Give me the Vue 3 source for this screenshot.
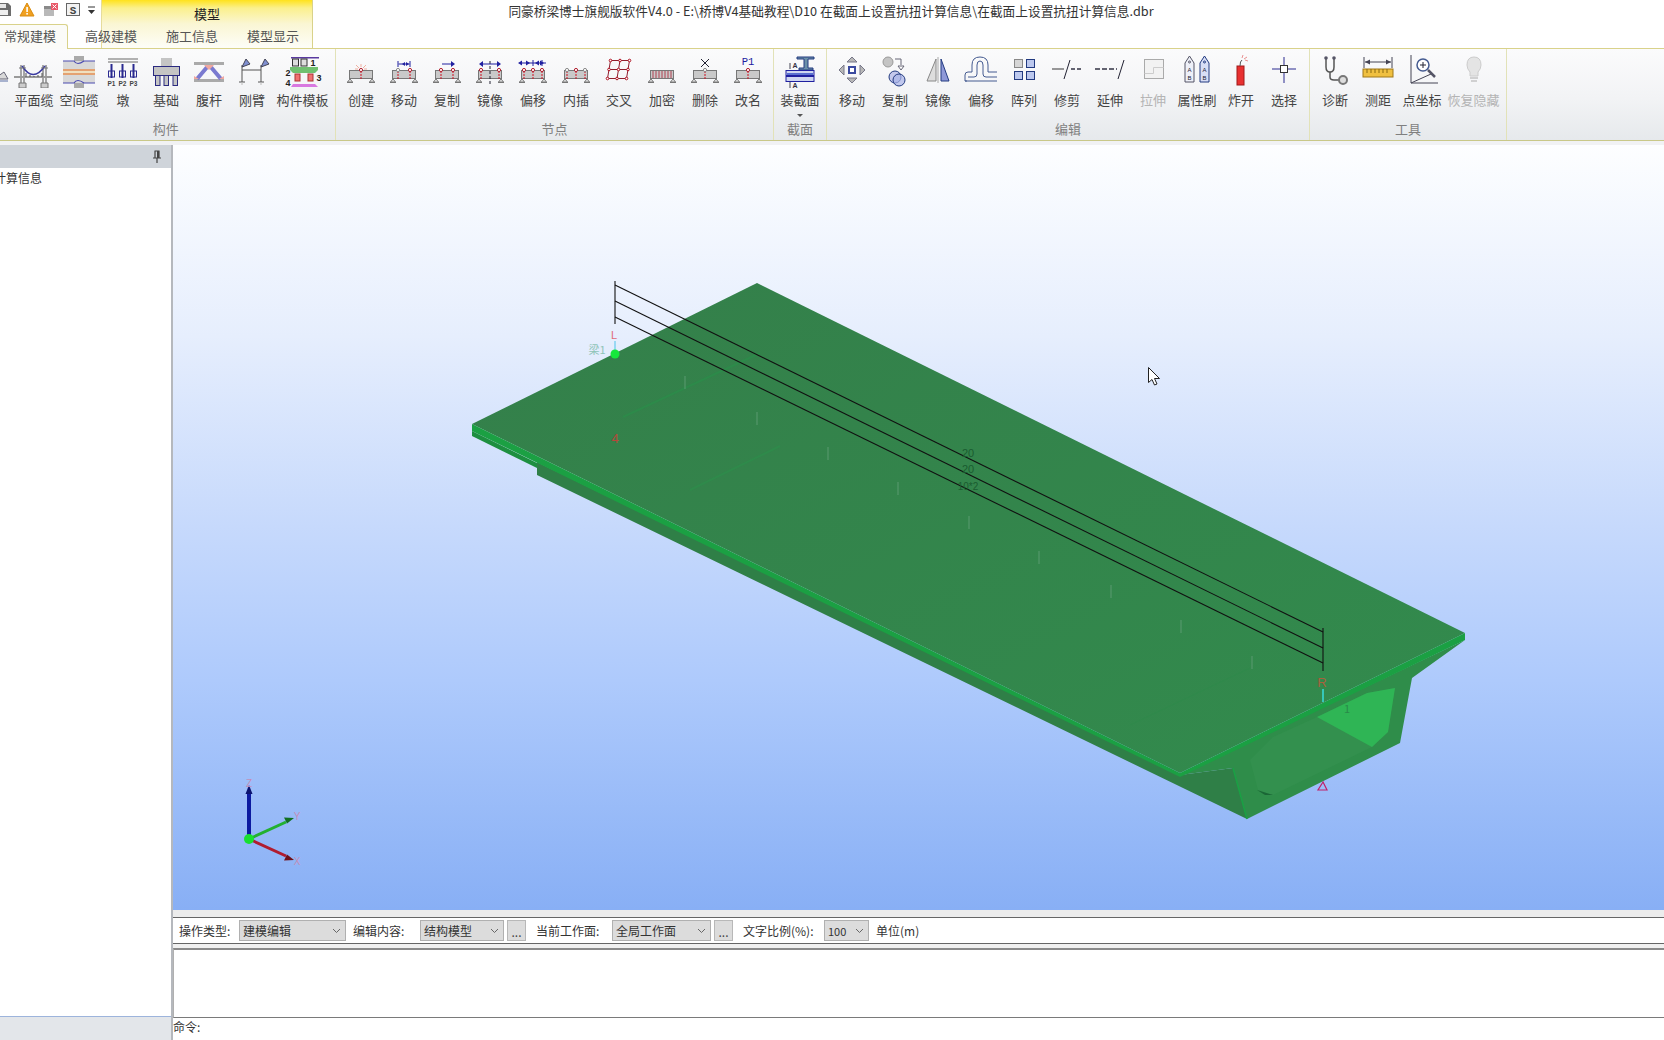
<template>
  <div class="app">
    <!-- 标题栏 -->
    <div class="titlebar">
      <div class="qat">
        <svg width="101" height="24" viewBox="0 0 101 24">
          <path d="M-4 3h12l3 3v10h-15z" fill="#6d6d6d" />
          <rect x="-2" y="4" width="8" height="4" fill="#e8e8e8" />
          <rect x="-2" y="10" width="10" height="5" fill="#efefef" />
          <path d="M27 3l7 13h-14z" fill="#f0a020" stroke="#d98c10" />
          <rect x="26.300" y="7" width="1.600" height="5" fill="#fff" />
          <rect x="26.300" y="13" width="1.600" height="1.600" fill="#fff" />
          <rect x="44" y="6" width="10" height="10" fill="#8a8a8a" />
          <rect x="44" y="9" width="10" height="7" fill="#b9b9b9" />
          <rect x="51" y="3" width="7" height="7" fill="#e85a6a" />
          <path d="M52.500 4.500l4 4m0-4l-4 4" stroke="#fff" />
          <rect x="66.500" y="3.500" width="13" height="12" fill="#f2f2f2" stroke="#666" />
          <text x="73" y="13.500" class="qat-s" text-anchor="middle">S</text>
          <path d="M88 7h7" stroke="#333" />
          <path d="M88 10h7l-3.500 4z" fill="#333" />
        </svg>
      </div>
      <div class="ctx">模型</div>
      <div class="title">同豪桥梁博士旗舰版软件V4.0 - E:\桥博V4基础教程\D10 在截面上设置抗扭计算信息\在截面上设置抗扭计算信息.dbr</div>
      <div class="tab-active">常规建模</div>
      <div class="ctx-tabs">
        <span>高级建模</span>
        <span>施工信息</span>
        <span>模型显示</span>
      </div>
    </div>

    <!-- 功能区 -->
    <div class="ribbon">
      <div class="group" v-for="group in groups" :key="group.name" :class="group.cls">
        <div class="items">
          <div class="cut" v-if="group.cut">
            <svg width="12" height="36" viewBox="0 0 12 36">
              <path d="M-6 27l10-7 4 7z" fill="#d9d9d9" stroke="#667" />
              <path d="M-6 29h14" stroke="#5b6ea5" />
            </svg>
          </div>
          <div class="tool" v-for="tool in group.tools" :key="tool.label" :class="{ off: tool.off }">
            <svg width="40" height="36" viewBox="0 0 40 36" v-html="icons[tool.icon]"></svg>
            <span class="tool-label">{{ tool.label }}</span>
            <i class="more" v-if="tool.more"></i>
          </div>
        </div>
        <div class="group-name">{{ group.name }}</div>
      </div>
    </div>
    <div class="gap"></div>

    <div class="body">
      <!-- 左侧树 -->
      <div class="side">
        <div class="side-head">
          <svg width="10" height="14" viewBox="0 0 10 14">
            <path d="M2.500 1h5M3 1v7M7 1v7M1 8h8M5 8v5" stroke="#444" stroke-width="1.200" fill="none" />
            <rect x="5" y="1" width="2" height="7" fill="#444" />
          </svg>
        </div>
        <div class="side-tree"><span>计算信息</span></div>
        <div class="side-foot"></div>
      </div>

      <div class="work">
        <!-- 三维视图 -->
        <div class="view">
          <svg class="scene" viewBox="173 145 1491 765">
            <defs>
              <linearGradient id="deck" x1="0" y1="0" x2="1" y2="1">
                <stop offset="0" stop-color="#347f4a" />
                <stop offset="1" stop-color="#328b4d" />
              </linearGradient>
            </defs>
            <!-- 腹板外侧 -->
            <polygon points="537,462 537,475 1247,819 1233,768 1180,775" fill="#2f7f47" />
            <!-- 端面 -->
            <polygon points="1180,775 1465,640 1412,678 1400,743 1247,819 1233,768" fill="#2f8d4a" />
            <line x1="1233" y1="768" x2="1247" y2="819" stroke="#1aa044" stroke-width="1.500" />
            <!-- 箱室 -->
            <polygon points="1250,760 1273,737 1317,717 1367,693 1395,688 1388,732 1372,747 1273,795 1258,790" fill="#33904e" />
            <polygon points="1317,717 1367,693 1395,688 1388,732 1372,747" fill="#2fb555" />
            <polygon points="1257,790 1273,795 1265,795" fill="#1b6636" />
            <!-- 顶板 -->
            <polygon points="472,424 757,283 1465,633 1180,773" fill="url(#deck)" />
            <polygon points="472,424 472,431 1180,777 1465,640 1465,633 1180,773" fill="#1ba043" />
            <polygon points="472,431 537,463 537,468 472,436" fill="#1d8f40" />
            <line x1="623" y1="417" x2="760" y2="353" stroke="#2d8a4a" stroke-width="2" />
            <line x1="690" y1="490" x2="780" y2="446" stroke="#2f8a4b" stroke-width="2" />
            <line x1="1130" y1="725" x2="1250" y2="668" stroke="#2f8a4b" stroke-width="1" />
            <!-- 竖向刻线 -->
            <g stroke="#5a9a70" stroke-width="1">
              <line v-for="t in ticks" :key="t[0]" :x1="t[0]" :x2="t[0]" :y1="t[1]" :y2="t[1] + 13" />
            </g>
            <!-- 钢束线 -->
            <g stroke="#111" stroke-width="1.100">
              <line x1="615" y1="285" x2="1323" y2="632" />
              <line x1="615" y1="301" x2="1323" y2="648" />
              <line x1="615" y1="317" x2="1323" y2="663" />
              <line x1="615" y1="281" x2="615" y2="324" />
              <line x1="1323" y1="628" x2="1323" y2="671" />
            </g>
            <g class="dim">
              <text x="968" y="457">20</text>
              <text x="968" y="473">20</text>
              <text x="968" y="490" class="dim-small">10*2</text>
            </g>
            <text x="614" y="339" class="mark" fill="#e06a78" text-anchor="middle">L</text>
            <line x1="615" y1="341" x2="615" y2="352" stroke="#7fd0f0" stroke-width="1.500" />
            <circle cx="615" cy="354" r="4.500" fill="#16e83c" />
            <text x="597" y="354" class="mark-cn" fill="#8fc4b8" text-anchor="middle">梁1</text>
            <text x="615" y="443" class="mark big" fill="#b5483a" text-anchor="middle">4</text>
            <text x="1322" y="687" class="mark big" fill="#a8603c" text-anchor="middle">R</text>
            <line x1="1323" y1="689" x2="1323" y2="702" stroke="#38dcdc" stroke-width="1.500" />
            <text x="1347" y="713" class="mark-cn" fill="#2a8a4a" text-anchor="middle">1</text>
            <path d="M1323 782l-5 8h9z" fill="none" stroke="#c0206a" stroke-width="1.200" />
            <!-- 坐标轴 -->
            <line x1="249" y1="839" x2="249" y2="792" stroke="#0c1aa0" stroke-width="4" />
            <path d="M249 785l-3.500 9h7z" fill="#0c1470" />
            <line x1="249" y1="839" x2="286" y2="822" stroke="#22b030" stroke-width="3" />
            <path d="M294 818l-10-0.500 3 6z" fill="#107020" />
            <line x1="249" y1="839" x2="286" y2="856" stroke="#b01c30" stroke-width="3" />
            <path d="M294 860l-10 0.500 3-6z" fill="#701018" />
            <circle cx="249" cy="839" r="5" fill="#18e030" />
            <g class="axis">
              <text x="249" y="787" text-anchor="middle">Z</text>
              <text x="297" y="820" text-anchor="middle">Y</text>
              <text x="297" y="865" text-anchor="middle">X</text>
            </g>
            <!-- 鼠标 -->
            <path d="M1148.500 367.500v15l3.500-3 2.500 5.500 2.500-1-2.500-5.500h5z" fill="#fff" stroke="#222" />
          </svg>
        </div>
        <div class="view-gap"></div>

        <!-- 参数条 -->
        <div class="bar">
          <span class="bar-label l1">操作类型:</span>
          <div class="pick p1">建模编辑<svg width="9" height="6" viewBox="0 0 9 6"><path d="M1 1l3.500 3.500L8 1" fill="none" stroke="#666" /></svg></div>
          <span class="bar-label l2">编辑内容:</span>
          <div class="pick p2">结构模型<svg width="9" height="6" viewBox="0 0 9 6"><path d="M1 1l3.500 3.500L8 1" fill="none" stroke="#666" /></svg></div>
          <div class="dots">...</div>
          <span class="bar-label l3">当前工作面:</span>
          <div class="pick p3">全局工作面<svg width="9" height="6" viewBox="0 0 9 6"><path d="M1 1l3.500 3.500L8 1" fill="none" stroke="#666" /></svg></div>
          <div class="dots">...</div>
          <span class="bar-label l4">文字比例(%):</span>
          <div class="pick p4">100<svg width="9" height="6" viewBox="0 0 9 6"><path d="M1 1l3.500 3.500L8 1" fill="none" stroke="#666" /></svg></div>
          <span class="bar-label l5">单位(m)</span>
        </div>
        <div class="output"></div>
        <div class="command">命令:</div>
      </div>
    </div>
  </div>
</template>

<script setup>
// 梁和节点的公共图形
const beam = (fill = '#c9c9c9') =>
  `<rect x="8.500" y="18.500" width="23" height="8" fill="${fill}" stroke="#777"/><path d="M9 27l-2.500 3h5zM31 27l-2.500 3h5z" fill="#eee" stroke="#777"/><path d="M6 30.500h6M28 30.500h6" stroke="#777"/>`
const node = (x, c = '#b02030') =>
  `<path d="M${x} 19v8" stroke="#d01020" stroke-dasharray="2 1"/><circle cx="${x}" cy="18" r="1.600" fill="#fff" stroke="${c}"/>`
const grey = '#8a8a8a'

const icons = {
  suspend: `<path d="M7 13v18M10 13v18M29 13v18M32 13v18" stroke="#555"/><path d="M5 31h7v5h-7zM27 31h7v5h-7z" fill="#ccc" stroke="#777"/><path d="M8 14Q19 31 31 14" fill="none" stroke="#3a3aa0" stroke-width="1.500"/><path d="M0 25h38" stroke="#9a9a9a" stroke-width="2"/><path d="M12 21v4M16 23v2M20 24v1M24 23v2M28 21v4" stroke="#555"/><path d="M5 16h7M27 16h7" stroke="#777"/>`,
  space: `<rect x="15" y="4" width="10" height="10" fill="#aaa"/><rect x="15" y="26" width="10" height="10" fill="#aaa"/><rect x="4" y="9" width="32" height="22" fill="#d8d8d8"/><path d="M4 9h11q3 5 10 0h11" fill="none" stroke="#4a4ab0" stroke-width="1.200"/><path d="M4 31h11q3-5 10 0h11" fill="none" stroke="#4a4ab0" stroke-width="1.200"/><path d="M4 18h32M4 22h32" stroke="#e89050" stroke-width="1.500"/><rect x="4" y="19" width="32" height="2" fill="#f0e0c0"/>`,
  pier: `<path d="M5 7h30M5 10h30" stroke="#999" stroke-width="1.500"/><g fill="#2a2a90"><rect x="7.500" y="12" width="2" height="14"/><rect x="18.500" y="12" width="2" height="14"/><rect x="29.500" y="12" width="2" height="14"/></g><g fill="none" stroke="#2a2a90"><rect x="5.500" y="19" width="6" height="6"/><rect x="16.500" y="19" width="6" height="6"/><rect x="27.500" y="19" width="6" height="6"/></g><text x="8.500" y="34" font-size="6.500" font-weight="700" fill="#444" text-anchor="middle" font-family="Liberation Sans">P1</text><text x="19.500" y="34" font-size="6.500" font-weight="700" fill="#444" text-anchor="middle" font-family="Liberation Sans">P2</text><text x="30.500" y="34" font-size="6.500" font-weight="700" fill="#444" text-anchor="middle" font-family="Liberation Sans">P3</text>`,
  base: `<rect x="15" y="6" width="11" height="8" fill="#c4c4c4"/><rect x="7.500" y="14.500" width="26" height="9" fill="#c4c4c4" stroke="#2a2a80"/><rect x="9.500" y="23.500" width="4.500" height="10" fill="#c4c4c4" stroke="#2a2a80"/><rect x="18" y="23.500" width="4.500" height="10" fill="#c4c4c4" stroke="#2a2a80"/><rect x="27" y="23.500" width="4.500" height="10" fill="#c4c4c4" stroke="#2a2a80"/>`,
  truss: `<rect x="5" y="10" width="30" height="3" fill="#aaa"/><rect x="5" y="27" width="30" height="3" fill="#aaa"/><path d="M8 27L19 14M32 27L21 14" stroke="#7a7ad0" stroke-width="4"/><path d="M15 13h10l-5 5zM5 24l5 3h-5zM35 24l-5 3h5z" fill="#f0a8a0"/>`,
  arm: `<path d="M10 13v17M29 13v17M10 18h19" stroke="#555" fill="none"/><path d="M10 15l4-8 4 5zM29 15l4-8 4 5z" fill="#7f8fd0" stroke="#445"/><path d="M7 30h6M26 30h6" stroke="#555"/><path d="M10 30v3M29 30v3" stroke="#bbb"/>`,
  tpl: `<rect x="8" y="5" width="28" height="1.500" fill="#5a3aa0"/><g fill="#ddd" stroke="#333"><rect x="9.500" y="7" width="6" height="7"/><rect x="18" y="7" width="6" height="7"/></g><text x="30" y="14" font-size="9" font-weight="700" fill="#222" font-family="Liberation Sans" text-anchor="middle">1</text><path d="M7 15h28v3l-3 3H10l-3-3z" fill="#70c070"/><text x="5" y="24" font-size="9" font-weight="700" fill="#222" font-family="Liberation Sans" text-anchor="middle">2</text><rect x="12" y="22" width="5" height="7" fill="#f07070" stroke="#a33"/><rect x="25" y="22" width="5" height="7" fill="#f07070" stroke="#a33"/><text x="36" y="29" font-size="9" font-weight="700" fill="#222" font-family="Liberation Sans" text-anchor="middle">3</text><text x="5" y="34" font-size="9" font-weight="700" fill="#222" font-family="Liberation Sans" text-anchor="middle">4</text><path d="M10 32h22l3 3H8z" fill="#d878e0"/>`,
  create: `${beam()}${node(20)}<path d="M20 12v3M15 13l3 3M25 13l-3 3M14 17h3M23 17h3" stroke="#f0b0a0"/>`,
  nmove: `${beam()}${node(14, grey)}${node(26)}<path d="M14 9v6M26 9v6M14.500 12h11" stroke="#2020a0"/><path d="M18 12l3-2v4zM25 12l-3-2v4z" fill="#2020a0"/>`,
  ncopy: `${beam()}${node(14)}${node(26)}<path d="M15 12h10" stroke="#2020a0"/><path d="M28 12l-4-3v6z" fill="#2020a0"/>`,
  nmirror: `${beam()}${node(11)}${node(29)}<path d="M20 9v24" stroke="#223" stroke-dasharray="3 2"/><path d="M11 12h18" stroke="#2020a0"/><path d="M9 12l4-3v6zM31 12l-4-3v6z" fill="#2020a0"/>`,
  offset: `${beam()}${node(11)}${node(20)}${node(29)}<path d="M7 11h26M20 8v6M29 8v6" stroke="#2020a0"/><path d="M5 11l4-2.500v5zM17 11l-4-2.500v5zM22 11l4-2.500v5zM31 11l-4-2.500v5z" fill="#2020a0"/>`,
  insert: `${beam()}${node(11, grey)}${node(20)}${node(29, grey)}`,
  cross: `<g fill="none" stroke="#902030"><path d="M11.500 8.500h19l-3 18h-19zM10 17.500h19M21 8.500l-3 18"/></g><g fill="#fff" stroke="#b01020"><circle cx="11.500" cy="8.500" r="1.300"/><circle cx="21" cy="8.500" r="1.300"/><circle cx="30.500" cy="8.500" r="1.300"/><circle cx="10" cy="17.500" r="1.300"/><circle cx="19.500" cy="17.500" r="1.300"/><circle cx="29" cy="17.500" r="1.300"/><circle cx="8.500" cy="26.500" r="1.300"/><circle cx="18" cy="26.500" r="1.300"/><circle cx="27.500" cy="26.500" r="1.300"/></g>`,
  dense: `${beam()}<path d="M11 19v7M14 19v7M17 19v7M20 19v7M23 19v7M26 19v7M29 19v7" stroke="#b04050"/>`,
  del: `${beam()}${node(20, grey)}<path d="M16 7l8 8M24 7l-8 8" stroke="#223"/>`,
  rename: `${beam()}${node(20)}<text x="20" y="13" font-size="10.500" fill="#2020a0" text-anchor="middle" font-family="Liberation Mono">P1</text>`,
  section: `<path d="M17 5h17v2h-6v9h5v2H19v-2h5V7h-7z" fill="#6a8fa8" stroke="#223a80"/><rect x="6" y="18.500" width="28" height="11" fill="#cfd6f0" stroke="#2020a0"/><path d="M6 24h28" stroke="#2020a0" stroke-width="2"/><rect x="7" y="21" width="26" height="2" fill="#5a70d0"/><text x="15" y="16" font-size="7" font-weight="700" fill="#334" text-anchor="middle" font-family="Liberation Sans">A</text><text x="15" y="36" font-size="7" font-weight="700" fill="#334" text-anchor="middle" font-family="Liberation Sans">A</text><path d="M10 11v6M10 30v6" stroke="#445"/>`,
  emove: `<path d="M20 5l5 5h-10zM20 31l5-5h-10zM7 18l5-5v10zM33 18l-5-5v10z" fill="#b8b8b8" stroke="#778"/><rect x="16" y="14" width="8" height="8" fill="#3a4aa0"/><rect x="18" y="16" width="4" height="4" fill="#fff"/>`,
  ecopy: `<circle cx="13" cy="10" r="5" fill="#c4c4c4" stroke="#999"/><path d="M20 7h6v6" fill="none" stroke="#667"/><path d="M23 14l3 4 3-4z" fill="#fff" stroke="#667"/><circle cx="20" cy="25" r="6" fill="#c4c8ec" stroke="#223a80"/><circle cx="24" cy="28" r="6" fill="#aab4e8" fill-opacity=".7" stroke="#223a80"/>`,
  emirror: `<path d="M18 7L9 29h9z" fill="#ddd" stroke="#888"/><path d="M23 7l8 22h-8z" fill="#8f99d8" stroke="#223a80"/><path d="M20 5v26" stroke="#aaa"/>`,
  eoffset: `<g fill="none" stroke="#445a90"><path d="M6 29h-2v-6q0-3 3-3h4V13q0-8 8-8t8 8v7h9M4 29h32"/><path d="M7 25h6q3 0 3-3V13q0-4 3-4t3 4v9q0 3 3 3h11"/></g>`,
  array: `<rect x="10.500" y="7.500" width="8" height="8" fill="#d6d6d6" stroke="#888"/><rect x="22.500" y="7.500" width="8" height="8" fill="#bcc8ee" stroke="#223a80"/><rect x="10.500" y="19.500" width="8" height="8" fill="#bcc8ee" stroke="#223a80"/><rect x="22.500" y="19.500" width="8" height="8" fill="#bcc8ee" stroke="#223a80"/>`,
  trim: `<path d="M5 17h12" stroke="#777" stroke-width="1.500"/><path d="M24 17h11" stroke="#334" stroke-width="1.500" stroke-dasharray="4 2"/><path d="M17 27L23 8" stroke="#223"/>`,
  extend: `<path d="M5 17h22" stroke="#334" stroke-width="1.500" stroke-dasharray="5 2"/><path d="M28 27L34 8" stroke="#223"/>`,
  stretch: `<rect x="11.500" y="7.500" width="19" height="19" fill="#f2f2f2" stroke="#aaa"/><path d="M11.500 21.500h9v-6h10" fill="none" stroke="#ccc"/>`,
  brush: `<g fill="#eef0f8" stroke="#556"><path d="M8 30V11l4.500-7 4.500 7v19z"/><path d="M23 30V11l4.500-7 4.500 7v19z" fill="#d8def5" stroke="#223a80"/></g><g font-size="6" fill="#223" text-anchor="middle" font-family="Liberation Sans"><text x="12.500" y="20">A</text><text x="12.500" y="28">B</text><text x="27.500" y="20">A</text><text x="27.500" y="28">B</text></g><circle cx="12.500" cy="10" r="1" fill="none" stroke="#556"/><circle cx="27.500" cy="10" r="1" fill="none" stroke="#223a80"/>`,
  bomb: `<rect x="16" y="14" width="7" height="19" fill="#e83030" stroke="#a01818"/><path d="M19 14Q19 9 21 8" fill="none" stroke="#555"/><path d="M22 3l-1 3M26 5l-3 2M27 9l-3-1" stroke="#e89090"/>`,
  select: `<path d="M20 5v26M8 17h24" stroke="#2a2a90"/><rect x="16.500" y="13.500" width="7" height="7" fill="#fff" stroke="#333"/>`,
  doctor: `<path d="M11 7v8q0 5 4 5t4-5V7" fill="none" stroke="#555" stroke-width="1.500"/><circle cx="11" cy="6" r="1.800" fill="#556"/><circle cx="19" cy="6" r="1.800" fill="#556"/><path d="M15 20v5q0 3 4 3h5" fill="none" stroke="#555" stroke-width="1.500"/><circle cx="28" cy="28" r="4" fill="#ddd" stroke="#777" stroke-width="2"/>`,
  ruler: `<path d="M6 5v11M34 5v11M7 10h26" stroke="#445"/><path d="M7 10l5-2.500v5zM33 10l-5-2.500v5z" fill="#445"/><rect x="5" y="17" width="30" height="8" fill="#f0c040" stroke="#a07818"/><path d="M9 17v4M13 17v4M17 17v4M21 17v4M25 17v4M29 17v4" stroke="#8a6a10"/>`,
  coord: `<path d="M9 3v28h27M9 31l20-9" fill="none" stroke="#445"/><circle cx="21" cy="13" r="6" fill="#fff" stroke="#445a90" stroke-width="1.500"/><path d="M21 10v6M18 13h6" stroke="#223"/><path d="M26 18l7 7" stroke="#556" stroke-width="2.500"/>`,
  bulb: `<path d="M20 5q7 0 7 8 0 4-3 7v4h-8v-4q-3-3-3-7 0-8 7-8z" fill="#e4e4e4" stroke="#ccc"/><path d="M16 26h8M17 29h6" stroke="#c4c4c4" stroke-width="1.500"/>`
}

const groups = [
  {
    name: '构件', cls: 'g-part', cut: true,
    tools: [
      { label: '平面缆', icon: 'suspend' },
      { label: '空间缆', icon: 'space' },
      { label: '墩', icon: 'pier' },
      { label: '基础', icon: 'base' },
      { label: '腹杆', icon: 'truss' },
      { label: '刚臂', icon: 'arm' },
      { label: '构件模板', icon: 'tpl' }
    ]
  },
  {
    name: '节点',
    tools: [
      { label: '创建', icon: 'create' },
      { label: '移动', icon: 'nmove' },
      { label: '复制', icon: 'ncopy' },
      { label: '镜像', icon: 'nmirror' },
      { label: '偏移', icon: 'offset' },
      { label: '内插', icon: 'insert' },
      { label: '交叉', icon: 'cross' },
      { label: '加密', icon: 'dense' },
      { label: '删除', icon: 'del' },
      { label: '改名', icon: 'rename' }
    ]
  },
  {
    name: '截面',
    tools: [{ label: '装截面', icon: 'section', more: true }]
  },
  {
    name: '编辑',
    tools: [
      { label: '移动', icon: 'emove' },
      { label: '复制', icon: 'ecopy' },
      { label: '镜像', icon: 'emirror' },
      { label: '偏移', icon: 'eoffset' },
      { label: '阵列', icon: 'array' },
      { label: '修剪', icon: 'trim' },
      { label: '延伸', icon: 'extend' },
      { label: '拉伸', icon: 'stretch', off: true },
      { label: '属性刷', icon: 'brush' },
      { label: '炸开', icon: 'bomb' },
      { label: '选择', icon: 'select' }
    ]
  },
  {
    name: '工具',
    tools: [
      { label: '诊断', icon: 'doctor' },
      { label: '测距', icon: 'ruler' },
      { label: '点坐标', icon: 'coord' },
      { label: '恢复隐藏', icon: 'bulb', off: true }
    ]
  }
]

// 顶板上的竖向小刻线
const ticks = [
  [685, 376], [757, 412], [828, 447], [898, 482], [969, 516],
  [1039, 551], [1111, 585], [1181, 620], [1252, 656]
]
</script>

<style scoped>
.app {
  width: 1664px;
  height: 1040px;
  display: flex;
  flex-direction: column;
  overflow: hidden;
  background: #fff;
  font-family: "Noto Sans CJK SC", "Liberation Sans", sans-serif;
  color: #333;
}

.titlebar {
  height: 48px;
  display: grid;
  grid-template-columns: 101px 212px 1fr;
  grid-template-rows: 24px 24px;
  background: #fff;
  font-size: 13px;
}
.qat { grid-column: 1; grid-row: 1; height: 24px; }
.qat svg { display: block; }
.qat-s { font: 700 11px "Liberation Mono", monospace; fill: #444; }
.ctx {
  grid-column: 2;
  grid-row: 1 / 3;
  text-align: center;
  padding-top: 5px;
  line-height: 18px;
  background: linear-gradient(#ffe21c 0, #fbf08c 8px, #faf6d4 24px, #fdfdf6 47px);
  border-left: 1px solid #e6dc9c;
  border-right: 1px solid #d9d28a;
  color: #222;
}
.title {
  grid-column: 3;
  grid-row: 1;
  padding-right: 315px;
  text-align: center;
  line-height: 22px;
  font-size: 12.700px;
  white-space: nowrap;
  color: #333;
}
.tab-active {
  grid-column: 1;
  grid-row: 2;
  width: 68px;
  height: 25px;
  box-sizing: border-box;
  line-height: 22px;
  padding-left: 4px;
  background: #fbfbf8;
  border: 1px solid #d9d28a;
  border-bottom: none;
  border-left: none;
  border-radius: 0 3px 0 0;
  z-index: 1;
  color: #555;
}
.ctx-tabs {
  grid-column: 1 / 3;
  grid-row: 2;
  display: flex;
  padding-left: 85px;
  gap: 29px;
  line-height: 24px;
  color: #555;
  z-index: 1;
}
.ctx-tabs span { width: 52px; text-align: center; }

.ribbon {
  height: 93px;
  box-sizing: border-box;
  display: flex;
  background: linear-gradient(#fbfbfc, #f2f3f5 55%, #e6e9ec);
  border-top: 1px solid #d9d28a;
  border-bottom: 1px solid #c9c888;
}
.group {
  display: flex;
  flex-direction: column;
  box-sizing: border-box;
  padding: 0 3.500px;
  border-right: 1px solid #e2e2b8;
}
.g-part { padding-left: 0; }
.items { display: flex; flex: 1; }
.cut { width: 11.500px; overflow: hidden; padding-top: 3px; }
.cut svg { display: block; }
.tool {
  min-width: 43px;
  box-sizing: border-box;
  padding: 3px 3px 0;
  display: flex;
  flex-direction: column;
  align-items: center;
  font-size: 13px;
  color: #444;
}
.tool svg { display: block; flex: none; margin: 0 -4px; }
.tool-label { line-height: 16px; margin-top: 3.500px; white-space: nowrap; }
.off { color: #b4b4b4; }
.more {
  width: 0;
  height: 0;
  margin-top: 6px;
  border: 3px solid transparent;
  border-top-color: #555;
  border-bottom: none;
}
.group-name {
  height: 19px;
  line-height: 16px;
  text-align: center;
  font-size: 13px;
  color: #7f7f7f;
}

.gap { height: 4px; background: #f1f2f4; }

.body { flex: 1; display: flex; min-height: 0; }

.side {
  width: 173px;
  box-sizing: border-box;
  display: flex;
  flex-direction: column;
  background: #fff;
  border-right: 2px solid #b5b8bd;
}
.side-head {
  height: 23px;
  background: #cfd4da;
  display: flex;
  justify-content: flex-end;
  align-items: center;
  padding-right: 9px;
}
.side-tree {
  flex: 1;
  overflow: hidden;
  font-size: 12px;
  line-height: 20px;
  color: #333;
  white-space: nowrap;
}
.side-tree span { display: block; margin: 0 0 0 -6px; }
.side-foot {
  height: 23px;
  background: #e3e6ea;
  border-top: 1px solid #9db4dc;
}

.work {
  flex: 1;
  min-width: 0;
  display: flex;
  flex-direction: column;
  background: #f0f0f0;
}
.view {
  height: 765px;
  background: linear-gradient(#fdfeff 0, #e6eefd 25%, #c6d9fc 50%, #aecafc 70%, #88aff5 100%);
}
.scene { display: block; width: 100%; height: 100%; }
.dim { font: 11px "Liberation Sans", sans-serif; fill: #1a5c30; text-anchor: middle; }
.dim-small { font-size: 10px; }
.mark { font: 11px "Liberation Sans", sans-serif; }
.big { font-size: 13px; }
.mark-cn { font: 11px "Noto Sans CJK SC", sans-serif; }
.axis { font: 10px "Liberation Sans", sans-serif; fill: #c28fb8; }
.view-gap { height: 7px; background: #ececec; }

.bar {
  height: 27px;
  box-sizing: border-box;
  display: flex;
  align-items: center;
  background: #fff;
  border-top: 1px solid #666;
  border-bottom: 1px solid #666;
  font-size: 12px;
  color: #333;
  white-space: nowrap;
}
.bar-label { flex: none; }
.l1 { margin-left: 6px; width: 60px; }
.l2 { margin-left: 7px; width: 67px; }
.l3 { margin-left: 10px; width: 76px; }
.l4 { margin-left: 10px; width: 81px; }
.l5 { margin-left: 7px; }
.pick {
  flex: none;
  height: 21px;
  box-sizing: border-box;
  display: flex;
  align-items: center;
  justify-content: space-between;
  padding: 0 4px 0 3px;
  background: #dcdcdc;
  border: 1px solid #b0b0b0;
}
.p1 { width: 107px; }
.p2 { width: 84px; }
.p3 { width: 99px; }
.p4 { width: 45px; font-size: 11px; }
.dots {
  width: 19px;
  height: 21px;
  margin-left: 3px;
  box-sizing: border-box;
  text-align: center;
  line-height: 21px;
  background: #dcdcdc;
  border: 1px solid #b8b8b8;
  color: #444;
}

.output {
  height: 70px;
  margin-top: 4px;
  background: #fff;
  border-top: 2px solid #8a8a8a;
  border-left: 1px solid #b0b0b0;
  border-bottom: 1px solid #7a7a7a;
  box-sizing: border-box;
}
.command {
  flex: 1;
  background: #fff;
  font-size: 12px;
  line-height: 18px;
  padding-top: 0;
}
</style>

<style>
html, body { margin: 0; padding: 0; overflow: hidden; }
</style>
